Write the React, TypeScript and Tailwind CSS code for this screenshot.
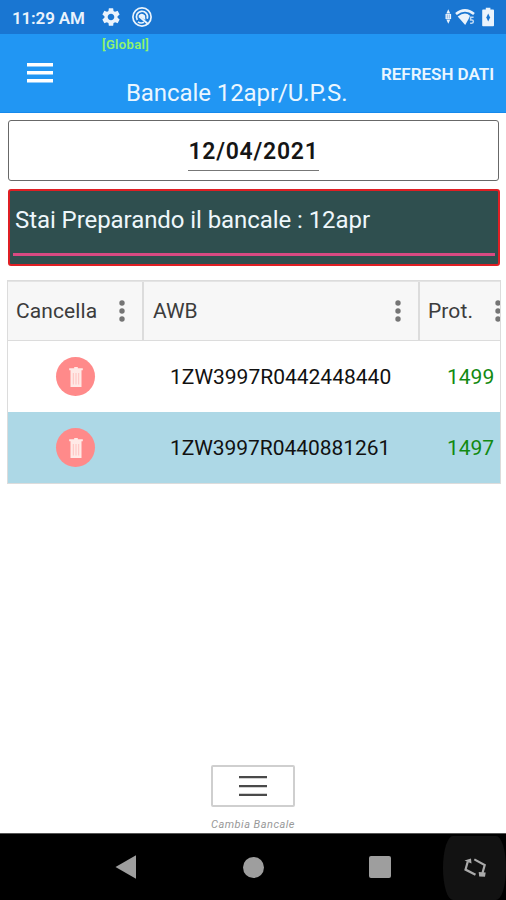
import { MdSettings } from "react-icons/md";

const shipments = [
  { awb: "1ZW3997R0442448440", prot: "1499", row: "bg-white tracking-[0px]" },
  { awb: "1ZW3997R0440881261", prot: "1497", row: "bg-[#add8e6] tracking-[-0.05px]" },
];

function StatusBar() {
  return (
    <div className="flex h-[34px] items-center bg-[#1976d2] pl-3 pr-[9px] text-[#eaf3fc]">
      <span className="w-[88px] whitespace-nowrap pt-[2px] text-[17px] font-semibold leading-5 tracking-[-0.15px]">
        11:29 AM
      </span>
      <MdSettings className="size-[22px]" />
      {/* Cerchio barrato */}
      <svg className="ml-[9px] size-[22px]" viewBox="0 0 22 22" fill="none" stroke="currentColor">
        <circle cx="11" cy="11" r="9.1" strokeWidth="1.7" />
        <path d="M6.3 14A5.6 5.6 0 1 1 16.2 12.8" strokeWidth="1.7" />
        <path d="M7 15.8Q9.5 17.8 13 16.3" strokeWidth="1.6" />
        <path d="M7.5 9.8Q10.5 6 14 9.5L14.3 14z" fill="currentColor" stroke="none" />
        <path d="M8 10.2l9.3 8" strokeWidth="1.8" />
      </svg>
      <svg className="ml-auto mb-[1px] h-[20px] w-[54px]" viewBox="0 0 54 20" fill="currentColor">
        <path d="M5.3 2.3l2 4.3h-4zM5.3 16.7l2-4.3h-4zM2.5 7h5.6v5H2.5z" />
        <path d="M4.3 7.6v3.8M6.3 7.6v3.8" stroke="#7eabdf" strokeWidth=".8" />
        <path d="M13 7.1Q22 -.4 31 7.1" fill="none" stroke="currentColor" strokeWidth="2.6" />
        <path d="M14.7 9.6Q22 4.1 27 8.7L25.6 12l-3.4 6z" />
        <path
          d="M30.6 10.2h-3v2.9h1.2q1.6 0 1.6 1.5t-1.6 1.6h-1.7"
          fill="none"
          stroke="#bcd7f3"
          strokeWidth="1.5"
        />
        <path d="M42.8 .8h4.6v1.8h2.8q.8 0 .8.8v15q0 .8-.8.8H40q-.8 0-.8-.8v-15q0-.8.8-.8h2.8z" />
        <path d="M45.2 6.5l1.9 4-1.9 4-1.9-4z" fill="#1976d2" />
      </svg>
    </div>
  );
}

function Toolbar() {
  return (
    <header className="flex h-[79px] border-b border-[#1689ec] bg-[#2196f3] text-[#eaf6ff]">
      <svg className="ml-[27px] mt-[29px] h-[20px] w-[26px] shrink-0" viewBox="0 0 26 20" fill="white">
        <path d="M0 0h26v3.4H0zM0 8h26v3.4H0zM0 16h26v3.4H0z" />
      </svg>
      <div className="ml-[49px] w-[246px] whitespace-nowrap">
        <div className="mt-[3px] text-[13px] font-semibold leading-4 tracking-[0.35px] text-[#92f36c]">
          [Global]
        </div>
        <h1 className="ml-6 mt-[25px] text-[24px] leading-[30px] tracking-[-0.08px]">
          Bancale 12apr/U.P.S.
        </h1>
      </div>
      <div className="ml-[33px] mt-[30px] whitespace-nowrap text-[17px] font-semibold leading-5 tracking-[-0.02px]">
        REFRESH DATI
      </div>
    </header>
  );
}

function Dots() {
  return (
    <svg className="h-[22px] w-[6px] shrink-0" viewBox="0 0 6 22" fill="#757575">
      <circle cx="3" cy="3" r="2.7" />
      <circle cx="3" cy="11" r="2.7" />
      <circle cx="3" cy="19" r="2.7" />
    </svg>
  );
}

function DeleteIcon() {
  return (
    <span className="flex size-[39.5px] items-center justify-center rounded-full bg-[#ff8a8a]">
      <svg className="h-[20px] w-[16px]" viewBox="0 0 16 20">
        <path d="M1.2 1.2h5V0h3.6v1.2h5v2H1.2zM2.5 3.2h11V20h-11z" fill="#ffe9e6" />
        <path d="M5.3 6v11.5M8 6v11.5M10.7 6v11.5" stroke="#ffc2bf" strokeWidth="1" />
      </svg>
    </span>
  );
}

function ShipmentsTable() {
  return (
    <div className="ml-[7px] mt-[14px] h-[204px] w-[494px] overflow-hidden border border-[#dcdcdc] text-[21px]">
      <div className="flex h-[60px] border-b border-[#dcdcdc] border-t border-t-[#e4e4e4] bg-[#f7f7f7] text-[#3c3c3c]">
        <div className="flex w-[136px] shrink-0 items-center justify-between border-r-2 border-[#dcdcdc] pl-2 pr-[17px]">
          <span className="pt-[2px] tracking-[0.1px]">Cancella</span>
          <Dots />
        </div>
        <div className="flex w-[276px] shrink-0 items-center justify-between border-r-2 border-[#dcdcdc] pl-[9px] pr-[17px]">
          <span className="pt-[2px]">AWB</span>
          <Dots />
        </div>
        <div className="flex w-[100px] shrink-0 items-center pl-2">
          <span className="w-[67px] pt-[2px] tracking-[0.1px]">Prot.</span>
          <Dots />
        </div>
      </div>
      {shipments.map((s) => (
        <div key={s.awb} className={`flex h-[71px] items-center ${s.row}`}>
          <div className="flex w-[135px] justify-center">
            <DeleteIcon />
          </div>
          <div className="w-[277px] pl-[27px] pt-[2px] text-[#111]">{s.awb}</div>
          <div className="pl-[27px] pt-[2px] text-[#128a12]">{s.prot}</div>
        </div>
      ))}
    </div>
  );
}

function NavigationBar() {
  return (
    <nav className="flex h-[67px] items-center border-t border-[#555] bg-black">
      <svg className="ml-[115px] h-6 w-[21px]" viewBox="0 0 21 24" fill="#9e9e9e">
        <path d="M.5 12L21 .2v23.6z" />
      </svg>
      <span className="ml-[107px] size-[21px] rounded-full bg-[#9e9e9e]" />
      <span className="ml-[105px] size-[22px] rounded-[2px] bg-[#9e9e9e]" />
      <div className="ml-[52px] mt-[2px] flex h-16 w-[63px] items-center justify-center rounded-[10px/32px] bg-[#121212]">
        <svg className="size-6" viewBox="0 0 24 24" fill="none" stroke="#aaa" strokeWidth="2.2">
          <path d="M12.5 18.8L2.5 13.6 4.8 5.5M11.3 3.4l10.4 5.7L19.5 17" />
          <path d="M1.5 4.4l6.5-2 .5 5.2zM15.7 16l7 .4-.7 4.3-5.8-.2z" fill="#aaa" stroke="none" />
        </svg>
      </div>
    </nav>
  );
}

export default function App() {
  return (
    <div className="flex h-[900px] w-[506px] flex-col overflow-hidden bg-white font-['Roboto',sans-serif]">
      <StatusBar />
      <Toolbar />
      <div className="ml-2 mt-[7px] flex h-[61px] w-[491px] justify-center rounded-[3px] border-[1.5px] border-[#686868]">
        <div className="mt-3 h-[38px] w-[131px] whitespace-nowrap border-b border-[#777] text-center text-[23px] font-semibold leading-[38px] tracking-[0.75px] text-[#151515]">
          12/04/2021
        </div>
      </div>
      <div className="ml-2 mt-[8px] h-[77px] w-[492px] rounded-[3px] border-2 border-[#df1f24] bg-[#2f4f4f] px-[3px] pt-[12px]">
        <div className="h-[53px] border-b-3 border-[#d84a82] pl-[2px] text-[24px] leading-[35px] tracking-[-0.07px] text-[#eef7fb]">
          Stai Preparando il bancale : 12apr
        </div>
      </div>
      <ShipmentsTable />
      <div className="mt-auto flex flex-col items-center">
        <button className="flex h-[42px] w-[84px] items-center justify-center rounded-[2px] border-2 border-[#cfcfcf]">
          <svg className="h-5 w-7" viewBox="0 0 28 20" fill="#4a4a4a">
            <path d="M0 0h28v2.2H0zM0 9h28v2.2H0zM0 17.8h28V20H0z" />
          </svg>
        </button>
        <span className="mt-[10px] h-[16px] text-[11px] italic leading-4 tracking-[0.48px] text-[#999]">
          Cambia Bancale
        </span>
      </div>
      <NavigationBar />
    </div>
  );
}
